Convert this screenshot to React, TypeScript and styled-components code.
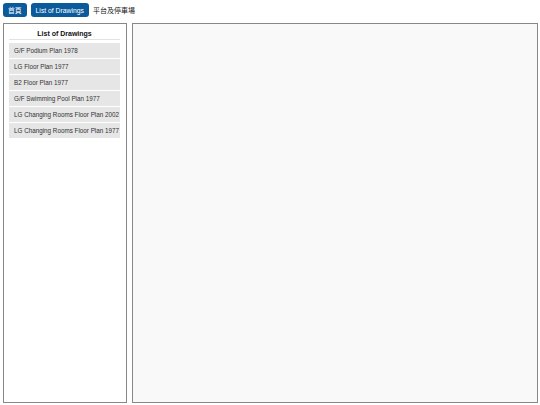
import React from 'react';
import styled, { createGlobalStyle } from 'styled-components';

const GlobalStyle = createGlobalStyle`
  html, body {
    margin: 0;
    padding: 0;
    background: #ffffff;
    font-family: "Liberation Sans", Arial, "Noto Sans CJK TC", sans-serif;
  }
`;

const Page = styled.div`
  width: 540px;
  height: 405px;
  box-sizing: border-box;
  padding: 3px 2px 2px 3px;
  display: flex;
  flex-direction: column;
  gap: 6px;
`;

const Nav = styled.div`
  display: flex;
  align-items: center;
  gap: 4px;
  height: 14px;
`;

const NavButton = styled.a`
  display: inline-flex;
  align-items: center;
  height: 14px;
  padding: 0 5px;
  background: #0b5a9b;
  color: #ffffff;
  font-size: 6.8px;
  border-radius: 3px;
  text-decoration: none;
`;

const Crumb = styled.span`
  font-size: 7px;
  color: #222;
`;

const Body = styled.div`
  flex: 1;
  display: flex;
  gap: 5px;
  min-height: 0;
`;

const Sidebar = styled.div`
  width: 124px;
  box-sizing: border-box;
  border: 1px solid #888;
  background: #ffffff;
  padding: 4px 6px 3px 5px;
`;

const SideTitle = styled.div`
  font-size: 7px;
  line-height: 8px;
  font-weight: bold;
  text-align: center;
  color: #111;
  padding: 2px 0 1px;
  border-bottom: 1px solid #e2e2e2;
  margin-bottom: 3px;
`;

const List = styled.div`
  display: flex;
  flex-direction: column;
  gap: 1px;
`;

const Item = styled.div`
  height: 15px;
  display: flex;
  align-items: center;
  padding: 0 5px;
  background: #e6e6e6;
  font-size: 6.3px;
  color: #333;
  white-space: nowrap;
`;

const Viewer = styled.div`
  flex: 1;
  box-sizing: border-box;
  border: 1px solid #888;
  background: #f9f9f9;
`;

const drawings = [
  'G/F Podium Plan 1978',
  'LG Floor Plan 1977',
  'B2 Floor Plan 1977',
  'G/F Swimming Pool Plan 1977',
  'LG Changing Rooms Floor Plan 2002',
  'LG Changing Rooms Floor Plan 1977',
];

export default function App() {
  return (
    <>
      <GlobalStyle />
      <Page>
        <Nav>
          <NavButton>首頁</NavButton>
          <NavButton>List of Drawings</NavButton>
          <Crumb>平台及停車場</Crumb>
        </Nav>
        <Body>
          <Sidebar>
            <SideTitle>List of Drawings</SideTitle>
            <List>
              {drawings.map((d) => (
                <Item key={d}>{d}</Item>
              ))}
            </List>
          </Sidebar>
          <Viewer />
        </Body>
      </Page>
    </>
  );
}
